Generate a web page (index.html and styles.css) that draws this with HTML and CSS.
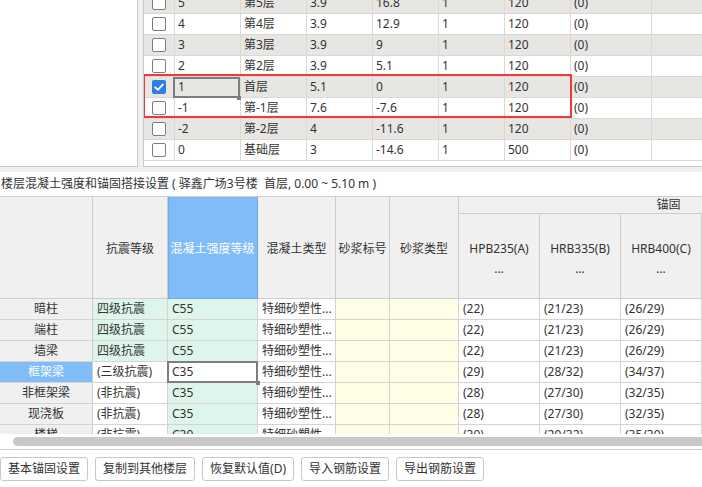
FILE: index.html
```html
<!DOCTYPE html>
<html lang="zh-CN">
<head>
<meta charset="utf-8">
<title>楼层设置</title>
<link rel="stylesheet" href="styles.css">
</head>
<body>
<div class="top">
  <div class="tree"></div>
  <div class="floors">
    <div class="floor-rows">
      <div class="frow alt"><div class="fcell ck"><span class="cb"></span></div><div class="fcell">5</div><div class="fcell">第5层</div><div class="fcell">3.9</div><div class="fcell">16.8</div><div class="fcell">1</div><div class="fcell">120</div><div class="fcell">(0)</div><div class="fcell last"></div></div>
      <div class="frow"><div class="fcell ck"><span class="cb"></span></div><div class="fcell">4</div><div class="fcell">第4层</div><div class="fcell">3.9</div><div class="fcell">12.9</div><div class="fcell">1</div><div class="fcell">120</div><div class="fcell">(0)</div><div class="fcell last"></div></div>
      <div class="frow alt"><div class="fcell ck"><span class="cb"></span></div><div class="fcell">3</div><div class="fcell">第3层</div><div class="fcell">3.9</div><div class="fcell">9</div><div class="fcell">1</div><div class="fcell">120</div><div class="fcell">(0)</div><div class="fcell last"></div></div>
      <div class="frow"><div class="fcell ck"><span class="cb"></span></div><div class="fcell">2</div><div class="fcell">第2层</div><div class="fcell">3.9</div><div class="fcell">5.1</div><div class="fcell">1</div><div class="fcell">120</div><div class="fcell">(0)</div><div class="fcell last"></div></div>
      <div class="frow alt"><div class="fcell ck"><span class="cb on"><svg viewBox="0 0 14 14" width="14" height="14"><path d="M3.2 7.3 L5.9 9.9 L10.9 4.4" fill="none" stroke="#fff" stroke-width="1.8" stroke-linecap="round" stroke-linejoin="round"/></svg></span></div><div class="fcell sel">1</div><div class="fcell">首层</div><div class="fcell">5.1</div><div class="fcell">0</div><div class="fcell">1</div><div class="fcell">120</div><div class="fcell">(0)</div><div class="fcell last"></div></div>
      <div class="frow"><div class="fcell ck"><span class="cb"></span></div><div class="fcell">-1</div><div class="fcell">第-1层</div><div class="fcell">7.6</div><div class="fcell">-7.6</div><div class="fcell">1</div><div class="fcell">120</div><div class="fcell">(0)</div><div class="fcell last"></div></div>
      <div class="frow alt"><div class="fcell ck"><span class="cb"></span></div><div class="fcell">-2</div><div class="fcell">第-2层</div><div class="fcell">4</div><div class="fcell">-11.6</div><div class="fcell">1</div><div class="fcell">120</div><div class="fcell">(0)</div><div class="fcell last"></div></div>
      <div class="frow"><div class="fcell ck"><span class="cb"></span></div><div class="fcell">0</div><div class="fcell">基础层</div><div class="fcell">3</div><div class="fcell">-14.6</div><div class="fcell">1</div><div class="fcell">500</div><div class="fcell">(0)</div><div class="fcell last"></div></div>
    </div>
    <div class="red-box"></div>
  </div>
</div>

<div class="title">楼层混凝土强度和锚固搭接设置 ( 驿鑫广场3号楼&nbsp; 首层, 0.00 ~ 5.10 m )</div>

<div class="grid">
  <div class="ghead">
    <div class="hc span2"></div>
    <div class="hc span2">抗震等级</div>
    <div class="hc span2 blue">混凝土强度等级</div>
    <div class="hc span2">混凝土类型</div>
    <div class="hc span2">砂浆标号</div>
    <div class="hc span2">砂浆类型</div>
    <div class="hc group">锚固</div>
    <div class="hc sub"><span>HPB235(A)</span><span>...</span></div>
    <div class="hc sub"><span>HRB335(B)</span><span>...</span></div>
    <div class="hc sub"><span>HRB400(C)</span><span>...</span></div>
    <div class="hc sub"><span>RRB400(D)</span><span>...</span></div>
    <div class="hc sub"><span>冷轧带肋</span><span>...</span></div>
  </div>

  <div class="brow"><div class="bc rh">暗柱</div><div class="bc g">四级抗震</div><div class="bc g">C55</div><div class="bc">特细砂塑性...</div><div class="bc y"></div><div class="bc y"></div><div class="bc">(22)</div><div class="bc">(21/23)</div><div class="bc">(26/29)</div><div class="bc">(26/29)</div><div class="bc">(35)</div></div>
  <div class="brow"><div class="bc rh">端柱</div><div class="bc g">四级抗震</div><div class="bc g">C55</div><div class="bc">特细砂塑性...</div><div class="bc y"></div><div class="bc y"></div><div class="bc">(22)</div><div class="bc">(21/23)</div><div class="bc">(26/29)</div><div class="bc">(26/29)</div><div class="bc">(35)</div></div>
  <div class="brow"><div class="bc rh">墙梁</div><div class="bc g">四级抗震</div><div class="bc g">C55</div><div class="bc">特细砂塑性...</div><div class="bc y"></div><div class="bc y"></div><div class="bc">(22)</div><div class="bc">(21/23)</div><div class="bc">(26/29)</div><div class="bc">(26/29)</div><div class="bc">(35)</div></div>
  <div class="brow"><div class="bc rh on">框架梁</div><div class="bc">(三级抗震)</div><div class="bc sel">C35</div><div class="bc">特细砂塑性...</div><div class="bc y"></div><div class="bc y"></div><div class="bc">(29)</div><div class="bc">(28/32)</div><div class="bc">(34/37)</div><div class="bc">(34/37)</div><div class="bc">(37)</div></div>
  <div class="brow"><div class="bc rh">非框架梁</div><div class="bc">(非抗震)</div><div class="bc g">C35</div><div class="bc">特细砂塑性...</div><div class="bc y"></div><div class="bc y"></div><div class="bc">(28)</div><div class="bc">(27/30)</div><div class="bc">(32/35)</div><div class="bc">(32/35)</div><div class="bc">(35)</div></div>
  <div class="brow"><div class="bc rh">现浇板</div><div class="bc">(非抗震)</div><div class="bc g">C35</div><div class="bc">特细砂塑性...</div><div class="bc y"></div><div class="bc y"></div><div class="bc">(28)</div><div class="bc">(27/30)</div><div class="bc">(32/35)</div><div class="bc">(32/35)</div><div class="bc">(35)</div></div>
  <div class="brow"><div class="bc rh">楼梯</div><div class="bc">(非抗震)</div><div class="bc g">C30</div><div class="bc">特细砂塑性...</div><div class="bc y"></div><div class="bc y"></div><div class="bc">(30)</div><div class="bc">(29/32)</div><div class="bc">(35/39)</div><div class="bc">(35/39)</div><div class="bc">(35)</div></div>
</div>

<div class="hscroll"><div class="thumb"></div></div>

<div class="buttons">
  <button class="btn">基本锚固设置</button>
  <button class="btn">复制到其他楼层</button>
  <button class="btn">恢复默认值(D)</button>
  <button class="btn">导入钢筋设置</button>
  <button class="btn">导出钢筋设置</button>
</div>
</body>
</html>
```

FILE: styles.css
```css
* { box-sizing: border-box; }
html, body { margin: 0; padding: 0; }
body {
  width: 702px;
  height: 487px;
  overflow: hidden;
  background: #f0f0f0;
  font-family: "Noto Sans", "Noto Sans CJK SC", sans-serif;
  font-size: 12px;
  color: #333;
}

/* ---------- top area ---------- */
.top {
  display: flex;
  gap: 5px;
  height: 167px;
}
.tree {
  width: 138px;
  background: #fff;
  border-right: 1px solid #c9c9c9;
  border-bottom: 1px solid #c9c9c9;
}
.floors {
  flex: 1;
  position: relative;
  background: #fff;
  border-left: 1px solid #c9c9c9;
  border-bottom: 1px solid #c9c9c9;
  overflow: hidden;
}
.floor-rows { margin-top: -7px; }
.frow {
  display: grid;
  grid-template-columns: 31px 66px 66px 66px 66px 66px 66px 81px 1fr;
  height: 21px;
  border-bottom: 1px solid #d9d9d9;
  background: #fff;
}
.frow.alt { background: #e7e6e3; }
.fcell {
  border-right: 1px solid #d9d9d9;
  padding-left: 3px;
  line-height: 20px;
  white-space: nowrap;
}
.fcell.last { border-right: 0; }
.fcell.ck {
  display: flex;
  align-items: center;
  justify-content: center;
  padding: 0;
}
.cb {
  display: block;
  width: 14px;
  height: 14px;
  border: 1px solid #7c7c7c;
  border-radius: 2px;
  background: #fff;
}
.cb.on {
  border: 0;
  background: #2f7fe2;
}
.cb svg { display: block; }
.fcell.sel { position: relative; }
.fcell.sel::after {
  content: "";
  position: absolute;
  left: -2px;
  top: 0;
  right: 0;
  bottom: -1px;
  border: 2px solid #7d7d7d;
}
.fcell.sel::before {
  content: "";
  position: absolute;
  right: -1px;
  bottom: -3px;
  width: 4px;
  height: 4px;
  background: #7d7d7d;
  z-index: 1;
}
.red-box {
  position: absolute;
  left: -1px;
  top: 74px;
  width: 429px;
  height: 44px;
  border: 2px solid #f03a3a;
}

/* ---------- title ---------- */
.title {
  margin-top: 5px;
  height: 24px;
  background: #fff;
  line-height: 24px;
  white-space: nowrap;
  padding-left: 1px;
}

/* ---------- lower grid ---------- */
.grid {
  height: 238px;
  overflow: hidden;
  background: #fff;
  border-top: 1px solid #cdcdcd;
}
.ghead, .brow {
  display: grid;
  grid-template-columns: 93px 75px 90px 78px 54px 69px 81px 81px 81px 81px 96px;
  width: 879px;
}
.ghead {
  grid-template-rows: 17px 85px;
  background: #f0f0f0;
}
.hc {
  border-right: 1px solid #cdcdcd;
  border-bottom: 1px solid #cdcdcd;
  display: flex;
  align-items: center;
  justify-content: center;
  text-align: center;
  white-space: nowrap;
  overflow: hidden;
}
.hc.span2 { grid-row: 1 / 3; }
.hc.group { grid-column: 7 / 12; line-height: 16px; }
.hc.sub {
  flex-direction: column;
  line-height: 20px;
  padding-top: 6px;
}
.hc.blue {
  background: #80bcf8;
  color: #fff;
  border-right-color: #6fa9ea;
  border-bottom-color: #6fa9ea;
  box-shadow: inset 1px 0 0 #6fa9ea;
}
.brow { height: 21px; }
.bc {
  border-right: 1px solid #d4d4d4;
  border-bottom: 1px solid #d4d4d4;
  line-height: 20px;
  padding-left: 4px;
  white-space: nowrap;
  overflow: hidden;
  background: #fff;
}
.bc.rh {
  background: #f0f0f0;
  text-align: center;
  padding-left: 0;
  border-right-color: #cdcdcd;
}
.bc.rh.on {
  background: #80bcf8;
  color: #fff;
}
.bc.g { background: #ddf5ea; }
.bc.y { background: #fffde6; }
.bc.sel {
  position: relative;
  overflow: visible;
}
.bc.sel::after {
  content: "";
  position: absolute;
  left: -1px;
  top: -1px;
  right: -1px;
  bottom: -1px;
  border: 2px solid #7d7d7d;
}
.bc.sel::before {
  content: "";
  position: absolute;
  right: -3px;
  bottom: -3px;
  width: 4px;
  height: 4px;
  background: #7d7d7d;
  z-index: 1;
}

/* ---------- scrollbar ---------- */
.hscroll {
  height: 16px;
  background: #fff;
  border-bottom: 1px solid #cfcfcf;
  padding: 3px 0 0 13px;
}
.thumb {
  height: 9px;
  background: #c8c8c8;
  border-radius: 5px 0 0 5px;
}

/* ---------- buttons ---------- */
.buttons {
  height: 37px;
  background: #fff;
  padding-top: 7px;
  display: flex;
  align-items: flex-start;
  gap: 7px;
}
.btn {
  height: 24px;
  margin: 0;
  padding: 0 7px;
  border: 1px solid #c8c8c8;
  border-radius: 3px;
  background: #fff;
  font-family: inherit;
  font-size: 12px;
  color: #333;
  line-height: 22px;
  white-space: nowrap;
}
```
